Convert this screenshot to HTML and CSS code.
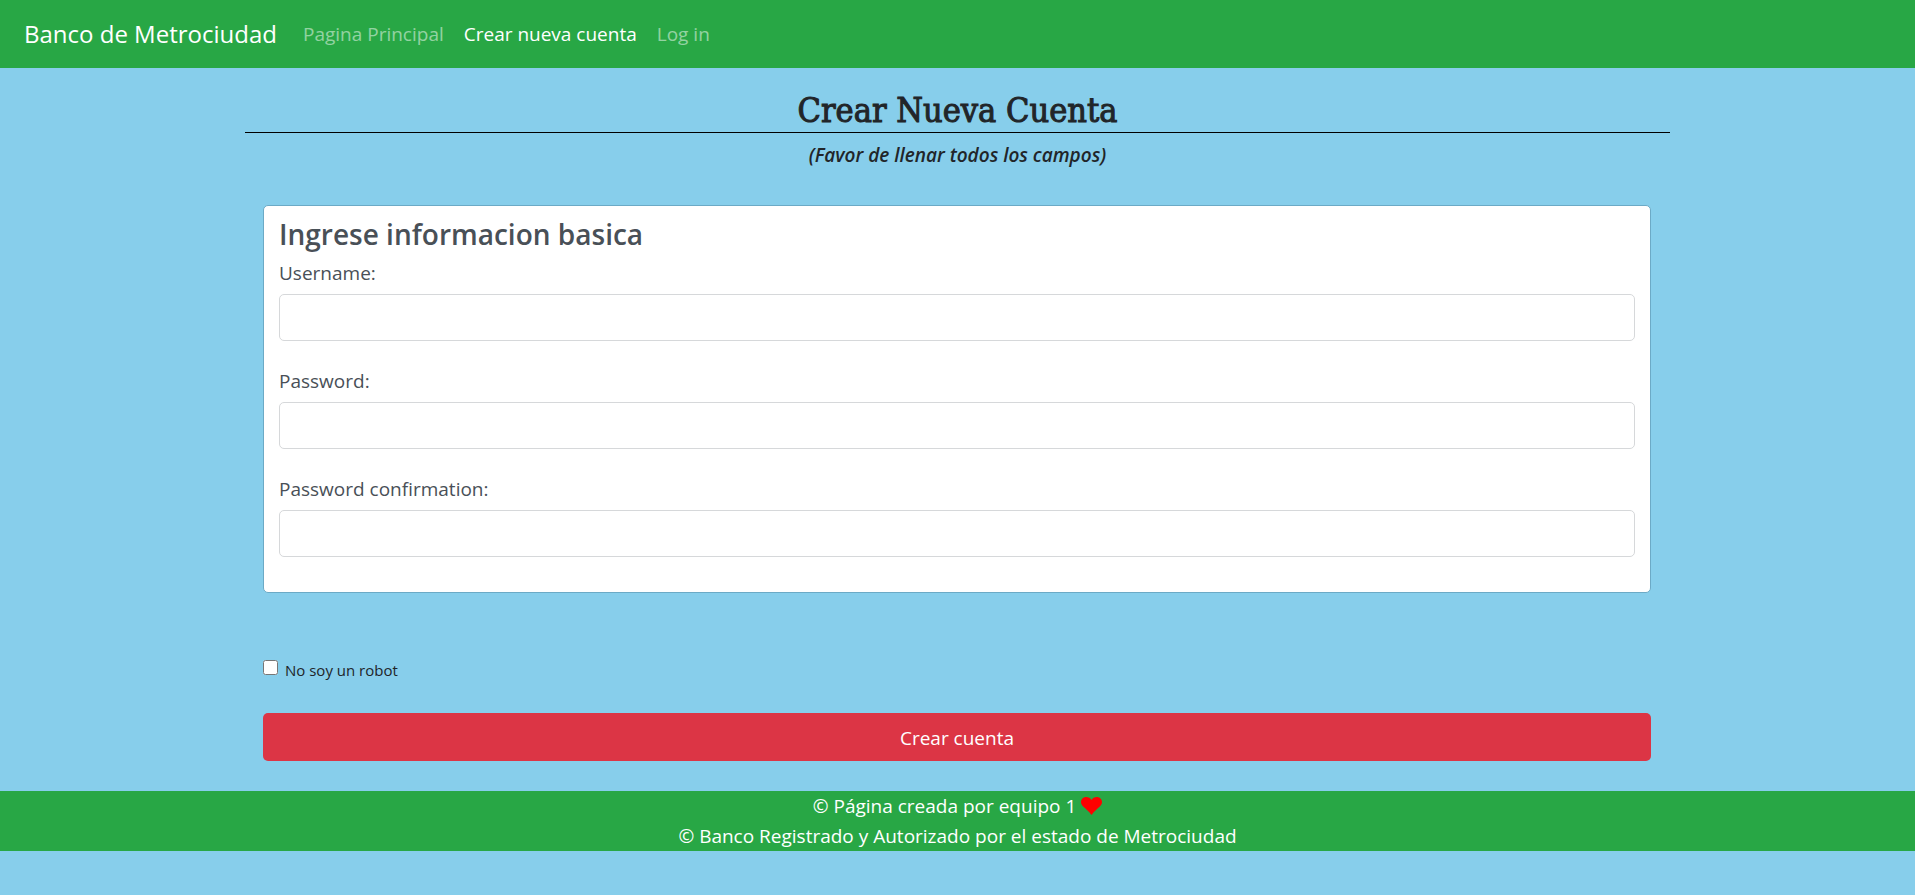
FILE: index.html
```html
<!DOCTYPE html>
<html lang="es">
<head>
<meta charset="utf-8">
<title>Banco de Metrociudad</title>
<link rel="stylesheet" href="styles.css">
</head>
<body>
<nav class="navbar">
  <a class="brand" href="#">Banco de Metrociudad</a>
  <ul class="nav-list">
    <li><a class="nav-link" href="#">Pagina Principal</a></li>
    <li><a class="nav-link active" href="#">Crear nueva cuenta</a></li>
    <li><a class="nav-link" href="#">Log in</a></li>
  </ul>
</nav>
<main class="container">
  <header class="page-header">
    <h1 class="title">Crear Nueva Cuenta</h1>
    <p class="subtitle">(Favor de llenar todos los campos)</p>
  </header>
  <form class="form">
    <section class="card">
      <h2 class="card-title">Ingrese informacion basica</h2>
      <div class="field">
        <label for="username">Username:</label>
        <input class="control" id="username" type="text">
      </div>
      <div class="field">
        <label for="password1">Password:</label>
        <input class="control" id="password1" type="password">
      </div>
      <div class="field">
        <label for="password2">Password confirmation:</label>
        <input class="control" id="password2" type="password">
      </div>
    </section>
    <div class="robot">
      <input class="check" id="robot" type="checkbox">
      <label for="robot">No soy un robot</label>
    </div>
    <button class="submit" type="button">Crear cuenta</button>
  </form>
</main>
<footer class="footer">
  <p>© Página creada por equipo 1
    <svg class="heart" viewBox="0 0 21 18" aria-hidden="true"><path d="M10.500 18C8 14.500 5 12.300 2.500 9.800C1 8.300 0 7 0 5C0 2.200 2.200 0 5.200 0C7.600 0 9.500 1 10.500 3C11.500 1 13.400 0 15.800 0C18.800 0 21 2.200 21 5C21 7 20 8.300 18.500 9.800C16 12.300 13 14.500 10.500 18Z"/></svg>
  </p>
  <p>© Banco Registrado y Autorizado por el estado de Metrociudad</p>
</footer>
</body>
</html>
```
FILE: styles.css
```css
* { box-sizing: border-box; }
body {
  margin: 0;
  background: #87ceeb;
  color: #212529;
  font-family: "Segoe UI", "Open Sans", sans-serif;
  font-size: 19px;
  line-height: 30px;
}
h1, h2, p, ul { margin: 0; padding: 0; }
.navbar {
  display: flex;
  align-items: center;
  gap: 16px;
  padding: 10px 24px;
  background: #28a745;
}
.brand {
  color: #fff;
  font-size: 24px;
  text-decoration: none;
}
.nav-list {
  display: flex;
  list-style: none;
}
.nav-link {
  display: block;
  padding: 9px 10px;
  color: rgba(255, 255, 255, 0.5);
  text-decoration: none;
}
.nav-link.active { color: #fff; }
.container {
  max-width: 1425px;
  margin: 0 auto;
}
.page-header {
  padding-top: 20px;
  text-align: center;
}
.title {
  border-bottom: 1px solid #000;
  font-family: "DejaVu Serif Condensed", "DejaVu Serif", serif;
  font-size: 34px;
  font-weight: 400;
  line-height: 44px;
  -webkit-text-stroke: 1px #212529;
}
.subtitle {
  margin-top: 7px;
  font-style: italic;
  font-weight: 600;
}
.form { padding: 35px 19px 30px 18px; }
.card {
  padding: 10px 15px 35px;
  background: #fff;
  border: 1px solid #6caac6;
  border-radius: 5px;
  color: #495057;
}
.card-title {
  margin-bottom: 6px;
  font-size: 28px;
  font-weight: 600;
  line-height: 36px;
}
.field {
  display: flex;
  flex-direction: column;
  gap: 6px;
}
.field + .field { margin-top: 25px; }
.control {
  width: 100%;
  height: 47px;
  padding: 8px 15px;
  background: #fff;
  border: 1px solid #d6d8da;
  border-radius: 5px;
  color: #495057;
  font: inherit;
}
.robot {
  display: flex;
  align-items: center;
  gap: 7px;
  margin: 62px 0 28px;
  font-size: 15px;
}
.check {
  width: 15px;
  height: 15px;
  margin: 0 0 5px;
}
.submit {
  width: 100%;
  padding: 10px 15px 8px;
  background: #dc3545;
  border: 0;
  border-radius: 5px;
  color: #fff;
  font: inherit;
}
.footer {
  background: #28a745;
  color: #fff;
  text-align: center;
}
.heart {
  width: 21px;
  height: 18px;
  fill: #f00;
  vertical-align: -2px;
}
```
